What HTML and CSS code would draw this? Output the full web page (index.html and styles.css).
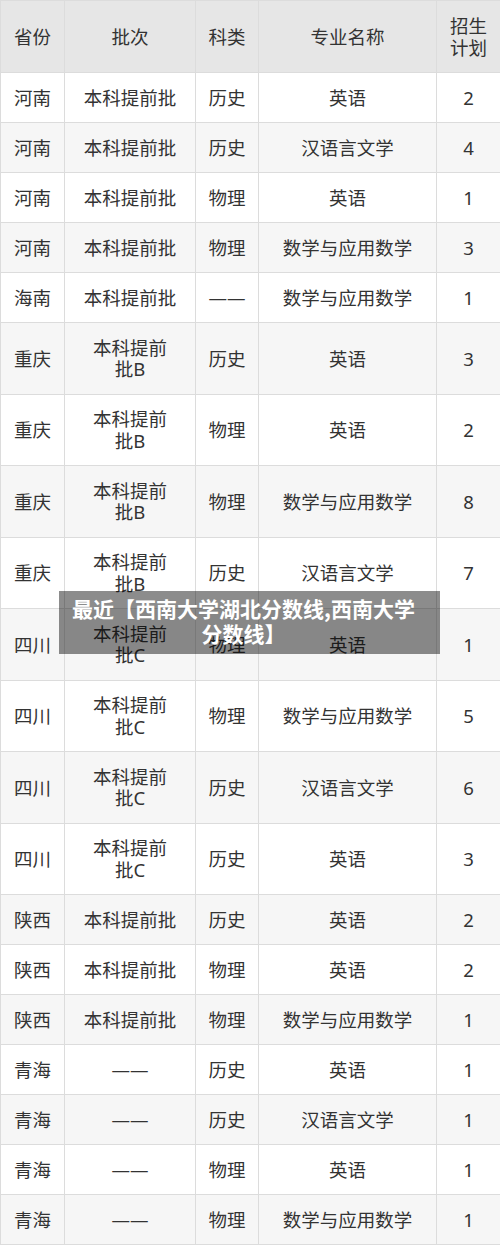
FILE: index.html
```html
<!DOCTYPE html>
<html lang="zh-CN">
<head>
<meta charset="utf-8">
<title>西南大学分数线</title>
<link rel="stylesheet" href="styles.css">
</head>
<body>
<div class="wrap">
<table class="score">
<colgroup>
<col class="c1"><col class="c2"><col class="c3"><col class="c4"><col class="c5">
</colgroup>
<thead>
<tr><th>省份</th><th>批次</th><th>科类</th><th>专业名称</th><th>招生<br>计划</th></tr>
</thead>
<tbody>
<tr><td>河南</td><td>本科提前批</td><td>历史</td><td>英语</td><td>2</td></tr>
<tr><td>河南</td><td>本科提前批</td><td>历史</td><td>汉语言文学</td><td>4</td></tr>
<tr><td>河南</td><td>本科提前批</td><td>物理</td><td>英语</td><td>1</td></tr>
<tr><td>河南</td><td>本科提前批</td><td>物理</td><td>数学与应用数学</td><td>3</td></tr>
<tr><td>海南</td><td>本科提前批</td><td>——</td><td>数学与应用数学</td><td>1</td></tr>
<tr><td>重庆</td><td>本科提前<br>批B</td><td>历史</td><td>英语</td><td>3</td></tr>
<tr><td>重庆</td><td>本科提前<br>批B</td><td>物理</td><td>英语</td><td>2</td></tr>
<tr><td>重庆</td><td>本科提前<br>批B</td><td>物理</td><td>数学与应用数学</td><td>8</td></tr>
<tr><td>重庆</td><td>本科提前<br>批B</td><td>历史</td><td>汉语言文学</td><td>7</td></tr>
<tr><td>四川</td><td>本科提前<br>批C</td><td>物理</td><td>英语</td><td>1</td></tr>
<tr><td>四川</td><td>本科提前<br>批C</td><td>物理</td><td>数学与应用数学</td><td>5</td></tr>
<tr><td>四川</td><td>本科提前<br>批C</td><td>历史</td><td>汉语言文学</td><td>6</td></tr>
<tr><td>四川</td><td>本科提前<br>批C</td><td>历史</td><td>英语</td><td>3</td></tr>
<tr><td>陕西</td><td>本科提前批</td><td>历史</td><td>英语</td><td>2</td></tr>
<tr><td>陕西</td><td>本科提前批</td><td>物理</td><td>英语</td><td>2</td></tr>
<tr><td>陕西</td><td>本科提前批</td><td>物理</td><td>数学与应用数学</td><td>1</td></tr>
<tr><td>青海</td><td>——</td><td>历史</td><td>英语</td><td>1</td></tr>
<tr><td>青海</td><td>——</td><td>历史</td><td>汉语言文学</td><td>1</td></tr>
<tr><td>青海</td><td>——</td><td>物理</td><td>英语</td><td>1</td></tr>
<tr><td>青海</td><td>——</td><td>物理</td><td>数学与应用数学</td><td>1</td></tr>
</tbody>
</table>
<div class="caption">最近【西南大学湖北分数线,西南大学<br>分数线】</div>
</div>
</body>
</html>
```

FILE: styles.css
```css
html, body {
  margin: 0;
  padding: 0;
  background: #ffffff;
}
body {
  font-family: "Noto Sans", "Noto Sans CJK SC", sans-serif;
  color: #333333;
}
.wrap {
  position: relative;
  width: 500px;
}
.score {
  width: 500px;
  border-collapse: collapse;
  table-layout: fixed;
  font-size: 18.5px;
}
.c1 { width: 64px; }
.c2 { width: 131px; }
.c3 { width: 63px; }
.c4 { width: 178px; }
.c5 { width: 64px; }
.score th,
.score td {
  border: 1px solid #dcdcdc;
  padding: 13.75px 4px;
  line-height: 21.5px;
  text-align: center;
  vertical-align: middle;
  font-weight: normal;
  white-space: nowrap;
}
.score th {
  background: #e6e6e6;
  padding-top: 14px;
  padding-bottom: 14px;
}
.score tbody tr:nth-child(even) td {
  background: #f6f6f6;
}
.caption {
  position: absolute;
  left: 59px;
  top: 591px;
  width: 381px;
  height: 63px;
  box-sizing: border-box;
  padding-top: 5px;
  padding-right: 12px;
  background: rgba(0, 0, 0, 0.45);
  color: #ffffff;
  font-family: "Noto Sans CJK SC", sans-serif;
  font-weight: bold;
  font-size: 21px;
  line-height: 25px;
  text-align: center;
}
```
